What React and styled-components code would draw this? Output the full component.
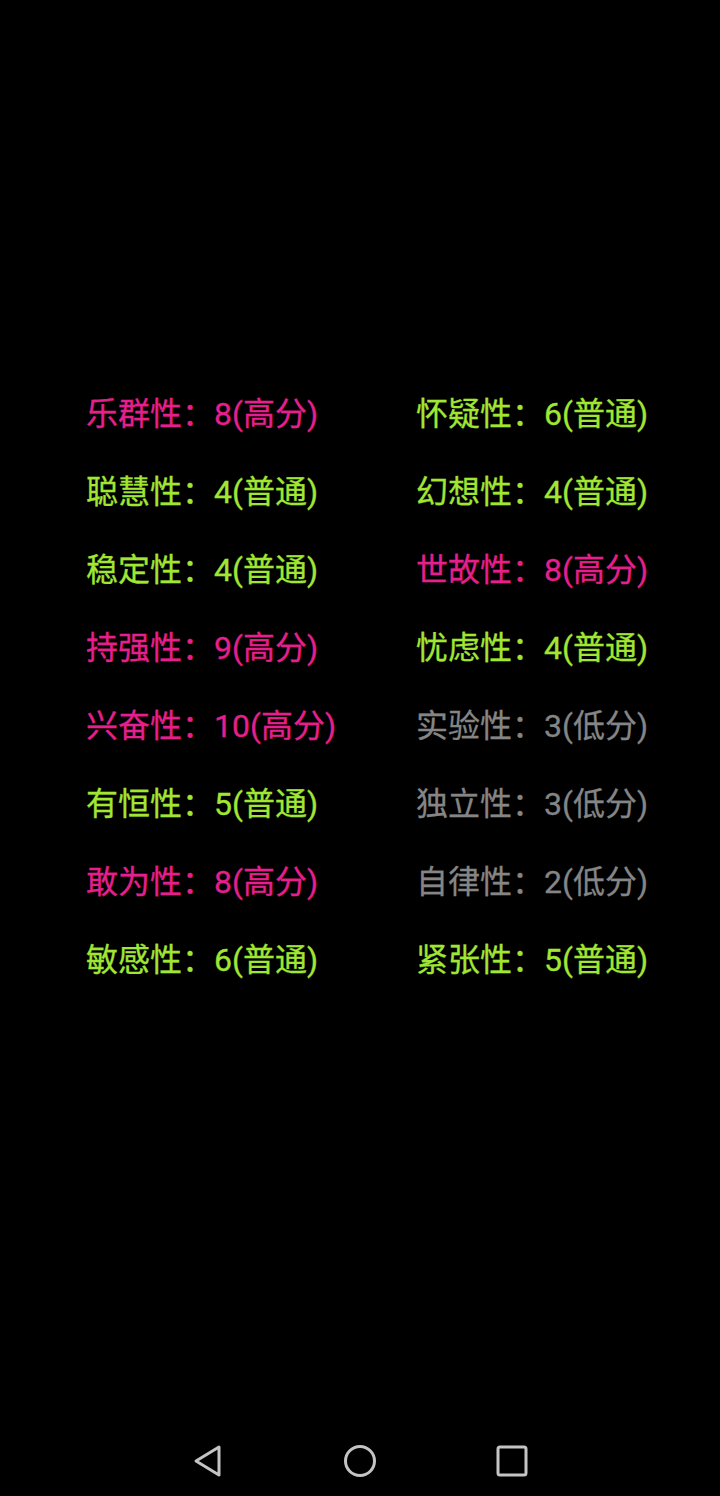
import React from 'react';
import styled, { createGlobalStyle } from 'styled-components';

const traits = [
  ['乐群性', 8, '高分'], ['怀疑性', 6, '普通'],
  ['聪慧性', 4, '普通'], ['幻想性', 4, '普通'],
  ['稳定性', 4, '普通'], ['世故性', 8, '高分'],
  ['持强性', 9, '高分'], ['忧虑性', 4, '普通'],
  ['兴奋性', 10, '高分'], ['实验性', 3, '低分'],
  ['有恒性', 5, '普通'], ['独立性', 3, '低分'],
  ['敢为性', 8, '高分'], ['自律性', 2, '低分'],
  ['敏感性', 6, '普通'], ['紧张性', 5, '普通'],
];

const levelColors = {
  高分: '#e51f8c',
  普通: '#a2e634',
  低分: '#858585',
};

const GlobalStyle = createGlobalStyle`
  html, body {
    margin: 0;
    padding: 0;
    background: #000;
  }
  body {
    font-family: Roboto, "Noto Sans CJK SC", sans-serif;
  }
`;

const Screen = styled.div`
  width: 720px;
  height: 1496px;
  background: #000;
  display: flex;
  flex-direction: column;
  box-sizing: border-box;
`;

const Content = styled.div`
  flex: 1;
  padding-top: 375px;
  padding-left: 86px;
`;

const Grid = styled.div`
  display: grid;
  grid-template-columns: 330px 300px;
  grid-auto-rows: 78px;
`;

const Trait = styled.div`
  font-size: 32px;
  font-weight: 400;
  line-height: 78px;
  height: 78px;
  white-space: nowrap;
  color: ${props => props.$color};
  -webkit-text-stroke: 0.3px ${props => props.$color};
`;

const NavBar = styled.div`
  height: 70px;
  display: flex;
  align-items: center;
  justify-content: center;
  box-sizing: border-box;
`;

const NavButton = styled.div`
  width: 152px;
  display: flex;
  justify-content: center;
  align-items: center;
`;

const App = () => {
  return (
    <>
      <GlobalStyle />
      <Screen>
        <Content>
          <Grid>
            {traits.map(([name, score, level]) => (
              <Trait key={name} $color={levelColors[level]}>
                {name}：{score}({level})
              </Trait>
            ))}
          </Grid>
        </Content>
        <NavBar>
          <NavButton>
            <svg width="34" height="36" viewBox="0 0 34 36">
              <path d="M28 4 L5 18 L28 32 Z" fill="none" stroke="#c4c4c4" strokeWidth="3" strokeLinejoin="round" />
            </svg>
          </NavButton>
          <NavButton>
            <svg width="36" height="36" viewBox="0 0 36 36">
              <circle cx="18" cy="18" r="14.5" fill="none" stroke="#c4c4c4" strokeWidth="3" />
            </svg>
          </NavButton>
          <NavButton>
            <svg width="34" height="34" viewBox="0 0 34 34">
              <rect x="3" y="3" width="28" height="28" rx="2" fill="none" stroke="#c4c4c4" strokeWidth="3" />
            </svg>
          </NavButton>
        </NavBar>
      </Screen>
    </>
  );
};

export default App;
